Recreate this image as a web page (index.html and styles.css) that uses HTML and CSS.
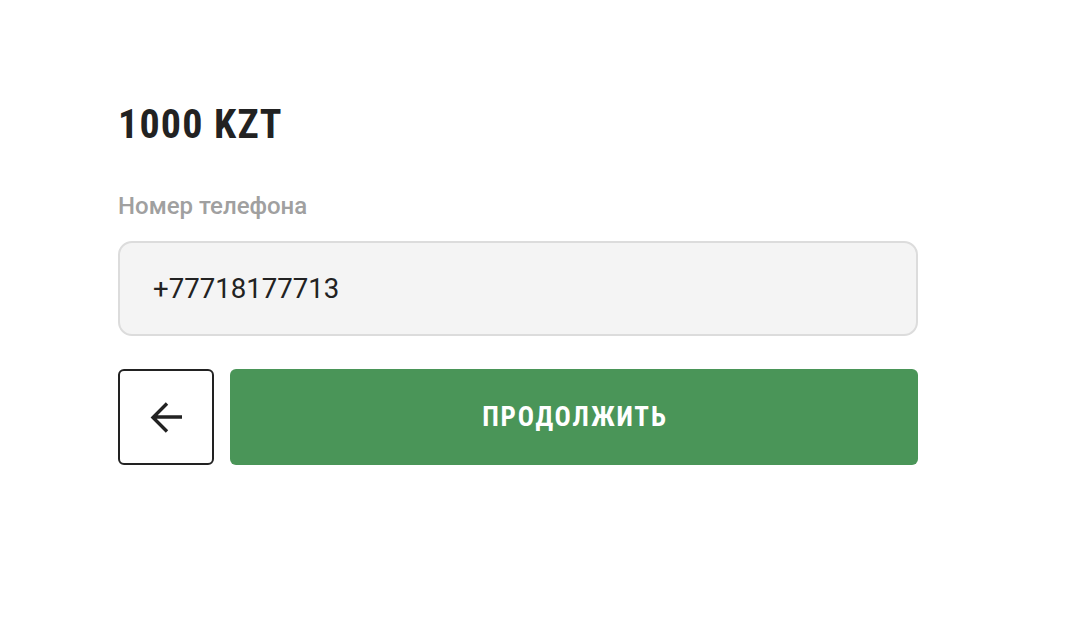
FILE: index.html
```html
<!DOCTYPE html>
<html lang="ru">
<head>
<meta charset="utf-8">
<link rel="stylesheet" href="styles.css">
</head>
<body>
<main class="page">
  <h1 class="amount">1000 KZT</h1>
  <label class="label" for="phone">Номер телефона</label>
  <div class="field"><span class="field-value" id="phone">+77718177713</span></div>
  <div class="actions">
    <button class="btn-back" type="button" aria-label="Назад">
      <svg class="arrow" viewBox="0 0 32 32" width="32" height="32" aria-hidden="true">
        <path d="M32 16H3M17 2.5L3 16.5L17 30.5" fill="none" stroke="#222" stroke-width="3.4" stroke-linecap="butt" stroke-linejoin="miter"/>
      </svg>
    </button>
    <button class="btn-continue" type="button">ПРОДОЛЖИТЬ</button>
  </div>
</main>
</body>
</html>
```

FILE: styles.css
```css
html, body {
  margin: 0;
  padding: 0;
  background: #ffffff;
}

body {
  font-family: Roboto, "Noto Sans", "Liberation Sans", sans-serif;
  color: #222222;
}

.page {
  display: flex;
  flex-direction: column;
  width: 800px;
  padding: 105px 0 0 118px;
}

.amount {
  margin: 0;
  font-size: 40px;
  line-height: 40px;
  font-weight: 700;
  font-stretch: condensed;
  letter-spacing: 1.2px;
  color: #222222;
}

.label {
  margin-top: 49px;
  font-size: 24px;
  line-height: 24px;
  font-weight: 500;
  color: #a0a0a0;
}

.field {
  margin-top: 23px;
  box-sizing: border-box;
  height: 95px;
  display: flex;
  align-items: center;
  padding: 0 33px;
  background: #f4f4f4;
  border: 2px solid #dcdcdc;
  border-radius: 14px;
}

.field-value {
  font-size: 27.6px;
  font-weight: 400;
  color: #222222;
}

.actions {
  margin-top: 33px;
  display: flex;
  gap: 16px;
}

.btn-back {
  box-sizing: border-box;
  width: 96px;
  height: 96px;
  display: flex;
  align-items: center;
  justify-content: center;
  padding: 0;
  background: #ffffff;
  border: 2px solid #222222;
  border-radius: 6px;
}

.arrow {
  display: block;
}

.btn-continue {
  flex: 1;
  height: 96px;
  padding: 0 0 0 1.8px;
  border: none;
  border-radius: 6px;
  background: #4a9558;
  color: #ffffff;
  font-family: inherit;
  font-stretch: condensed;
  font-size: 27px;
  font-weight: 700;
  letter-spacing: 1.8px;
}
```
